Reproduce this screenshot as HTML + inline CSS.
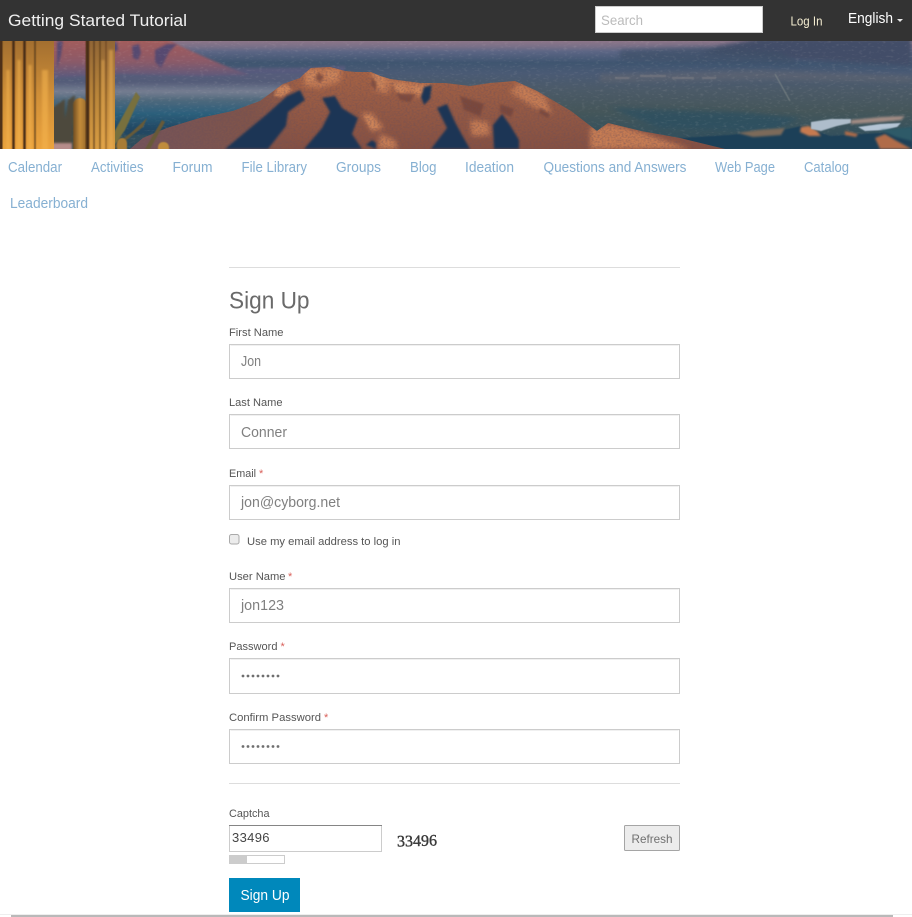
<!DOCTYPE html>
<html lang="en">
<head>
<meta charset="utf-8">
<title>Sign Up - Getting Started Tutorial</title>
<style>
html,body{margin:0;padding:0;background:#fff;width:912px;height:917px;overflow:hidden}
svg{display:block;position:absolute;left:0;top:0}
text{font-family:"Liberation Sans",sans-serif}
.nav{font-size:14.5px;fill:#86b0d2}
.lab{font-size:11px;fill:#555}
.val{font-size:14.5px;fill:#808080}
.req{font-size:11px;fill:#d9605a}
.box{fill:#fff;stroke:#ccc;stroke-width:1}
.in{fill:none;stroke:#f0f0f0;stroke-width:1}
.dot{fill:#6f6f6f}
</style>
</head>
<body>
<svg width="912" height="917" viewBox="0 0 912 917" xmlns="http://www.w3.org/2000/svg">
<defs>
<linearGradient id="plain" gradientUnits="userSpaceOnUse" x1="0" y1="41" x2="0" y2="149">
<stop offset="0" stop-color="#8c7588"/>
<stop offset=".05" stop-color="#7a7088"/>
<stop offset=".1" stop-color="#5b6584"/>
<stop offset=".2" stop-color="#3f5570"/>
<stop offset=".3" stop-color="#4a5a74"/>
<stop offset=".45" stop-color="#4b5a68"/>
<stop offset=".65" stop-color="#45565a"/>
<stop offset=".82" stop-color="#38525c"/>
<stop offset="1" stop-color="#2b4a5c"/>
</linearGradient>
<linearGradient id="pm" gradientUnits="userSpaceOnUse" x1="0" y1="41" x2="0" y2="78">
<stop offset="0" stop-color="#a25b5c"/>
<stop offset=".55" stop-color="#8c5a68"/>
<stop offset="1" stop-color="#5a5a7e"/>
</linearGradient>
<linearGradient id="val" gradientUnits="userSpaceOnUse" x1="0" y1="70" x2="0" y2="130">
<stop offset="0" stop-color="#565a7c"/>
<stop offset=".2" stop-color="#535c78"/>
<stop offset=".36" stop-color="#767e92"/>
<stop offset=".5" stop-color="#4f687c"/>
<stop offset=".72" stop-color="#2c607c"/>
<stop offset="1" stop-color="#214662"/>
</linearGradient>
<linearGradient id="rock" gradientUnits="userSpaceOnUse" x1="0" y1="66" x2="0" y2="149">
<stop offset="0" stop-color="#a96444"/>
<stop offset=".5" stop-color="#965a44"/>
<stop offset="1" stop-color="#855042"/>
</linearGradient>
<linearGradient id="rockL" gradientUnits="userSpaceOnUse" x1="130" y1="0" x2="300" y2="0">
<stop offset="0" stop-color="#74545a"/>
<stop offset=".7" stop-color="#80544a"/>
<stop offset="1" stop-color="#80544a" stop-opacity="0"/>
</linearGradient>
<linearGradient id="cacBase" gradientUnits="userSpaceOnUse" x1="0" y1="41" x2="0" y2="149">
<stop offset="0" stop-color="#a36f30"/>
<stop offset=".5" stop-color="#cf8f38"/>
<stop offset="1" stop-color="#eba33e"/>
</linearGradient>
<linearGradient id="cacBase2" gradientUnits="userSpaceOnUse" x1="0" y1="41" x2="0" y2="149">
<stop offset="0" stop-color="#916636"/>
<stop offset=".5" stop-color="#b9853a"/>
<stop offset="1" stop-color="#d89c42"/>
</linearGradient>
<linearGradient id="smallc" gradientUnits="userSpaceOnUse" x1="73" y1="0" x2="87" y2="0">
<stop offset="0" stop-color="#6e4c22"/>
<stop offset=".5" stop-color="#c48c3a"/>
<stop offset="1" stop-color="#96692c"/>
</linearGradient>
<filter id="b1" filterUnits="userSpaceOnUse" x="-40" y="0" width="1000" height="200"><feGaussianBlur stdDeviation="1"/></filter>
<filter id="b2" filterUnits="userSpaceOnUse" x="-40" y="0" width="1000" height="200"><feGaussianBlur stdDeviation=".6"/></filter>
<filter id="b3" filterUnits="userSpaceOnUse" x="-40" y="0" width="1000" height="200"><feGaussianBlur stdDeviation="2.5"/></filter>
<filter id="gd" filterUnits="userSpaceOnUse" x="0" y="41" width="912" height="108">
<feTurbulence type="fractalNoise" baseFrequency=".5 .6" numOctaves="2" seed="4"/>
<feColorMatrix values="0 0 0 0 .15  0 0 0 0 .08  0 0 0 0 .1  2 0 0 0 -.8"/>
</filter>
<filter id="gl" filterUnits="userSpaceOnUse" x="0" y="41" width="912" height="108">
<feTurbulence type="fractalNoise" baseFrequency=".22 .5" numOctaves="2" seed="9"/>
<feColorMatrix values="0 0 0 0 .78  0 0 0 0 .72  0 0 0 0 .68  2.6 0 0 0 -1.45"/>
</filter>
<clipPath id="bn"><rect x="0" y="41" width="912" height="108"/></clipPath>
<clipPath id="mc"><path d="M130 149L143 138L167 128L200 118L233 111L260 101L283 84L300 78L304 74L311 68L330 67L345 71L356 72L371 72L380 76L390 79L420 83L445 83L470 86L490 83L515 81L537 91L571 111L597 131L608 123L641 131L680 138L725 149Z"/></clipPath>
</defs>

<rect x="0" y="0" width="912" height="41" fill="#333"/>
<text x="8" y="26" font-size="16.5" fill="#f0f0f0" textLength="179" lengthAdjust="spacingAndGlyphs">Getting Started Tutorial</text>
<rect x="595.5" y="6.5" width="167" height="26" fill="#fff" stroke="#ccc"/>
<text x="601" y="25" font-size="14" fill="#bbb" textLength="42" lengthAdjust="spacingAndGlyphs">Search</text>
<text x="790.5" y="25.5" font-size="12.5" fill="#f3ecd0" textLength="32" lengthAdjust="spacingAndGlyphs">Log In</text>
<text x="848" y="23" font-size="14.5" fill="#fff" textLength="45" lengthAdjust="spacingAndGlyphs">English</text>
<path d="M897 19h6l-3 3z" fill="#e8e8e8"/>

<g clip-path="url(#bn)">
<rect x="0" y="41" width="912" height="108" fill="url(#plain)"/>
<path d="M760 38L912 38V66L840 62L700 54L720 46Z" fill="#434e68" filter="url(#b3)"/>
<path d="M620 50L700 47L780 52L800 64L700 62L620 60Z" fill="#3d5068" opacity=".7" filter="url(#b3)"/>
<path d="M600 74L760 70L912 76V82L760 80L600 82Z" fill="#6d6c70" opacity=".4" filter="url(#b3)"/>
<path d="M610 108L740 112L800 118L770 132L660 128Z" fill="#2c5062" opacity=".7" filter="url(#b3)"/>
<path d="M40 68H300L345 66L340 135H40Z" fill="url(#val)" filter="url(#b1)"/>
<path d="M50 38H165L180 46L207 58L233 69L250 75L200 76L120 74L50 78Z" fill="url(#pm)" filter="url(#b1)"/>
<path d="M132 46l7-2 2 9-3 7-5-2zM155 50l12-6 10 0-8 8-4 8-4 8-6-6zM57 41h6l-2 14-4 14zM112 42l5 0 1 8-6 3z" fill="#574a70" filter="url(#b1)"/>

<rect x="0" y="41" width="912" height="108" filter="url(#gl)" opacity=".14"/>
<path d="M775 74L790 101" stroke="#8b9290" stroke-width="1" fill="none" opacity=".7" filter="url(#b2)"/>
<path d="M672 78h22M702 78h14M640 76h26M615 78h14" stroke="#8d8a8c" stroke-width="2" opacity=".45" filter="url(#b2)"/>

<path d="M660 149L681 138L730 135L788 129L801 126L830 136L880 133L912 128V149Z" fill="#1f3f58" filter="url(#b2)"/>
<path d="M738 133l20-3 27-2-4 7-28 2z" fill="#7c6a5a" filter="url(#b1)"/>
<path d="M801 127l8-1 8 5 4 5-12 0-9-4z" fill="#c67a50" filter="url(#b1)"/>
<path d="M811 122l20-3 20 0 0 4-14 3-16 5-10-2z" fill="#aebdcb" filter="url(#b2)"/>
<path d="M851 120l30-3 24-1-4 4-20 2-30 2z" fill="#a38c84" filter="url(#b1)"/>
<path d="M858 127l22-3 21-1-4 4-12 3-20 1z" fill="#b5c5d5" filter="url(#b2)"/>
<path d="M845 131l13 3-2 3-11-2zM875 138l10-4 10 6 13 7 4 2h-32z" fill="#b06c48" filter="url(#b1)"/>
<path d="M880 130l32-3v14l-16-4z" fill="#2d5a68" filter="url(#b1)"/>

<g clip-path="url(#mc)">
<rect x="125" y="60" width="610" height="95" fill="url(#rock)"/>
<rect x="130" y="60" width="170" height="95" fill="url(#rockL)"/>
<g filter="url(#b3)">
<path d="M304 68H342L340 82L320 88L304 86ZM371 70L392 78L388 94L374 90ZM390 79L432 84L428 97L400 96ZM361 113L372 113L384 128L372 132ZM520 82L545 96L552 115L530 105L510 92ZM470 120L488 122L490 135L472 136ZM590 128L612 124L640 132L690 149H590ZM380 134L395 140L398 149H378Z" fill="#c67c52"/>
</g>
<g filter="url(#b1)">
<path d="M306 72l10-2 2 7-10 6zM326 70l12 1-2 8-8 0zM373 74l12 4-2 10-8-4zM394 83l12 2-2 8-8-2zM412 86l14 1-4 7-8-2zM364 116l7 0 8 11-8 2zM277 87l10-3 5 6-10 7-8-1z" fill="#cd8458"/>
<path d="M372 76l5 7-1 8-5-6zM318 72l6 5-4 6-5-5zM396 93l20 1-6 8-10-2zM460 96l24 8-4 12-16-6zM500 104l14 5-3 8-11-5zM540 108l10 6-2 4-9-5z" fill="#6e4038" opacity=".7"/>
</g>
<rect x="125" y="60" width="610" height="95" filter="url(#gd)" opacity=".55"/>
<g filter="url(#b1)" fill="#1f3555">
<path d="M225 149L267 114L287 96L300 90L305 100L288 112L286 126L268 149Z"/>
<path d="M304 149L322 128L330 112L322 98L335 96L342 108L358 118L352 134L362 149Z"/>
<path d="M431 149L447 128L437 108L447 104L455 122L462 135L470 149Z"/>
<path d="M494 149L493 125L502 114L510 125L519 140L519 149Z"/>
<path d="M366 145l6-5 4 3 0 6zM424 87l8-2-2 14-6 6-3-8z"/>
</g>
</g>

<path d="M52 149V108L65 99V149ZM60 149L68 100L75 95L72 149Z" fill="#4d4a3c" filter="url(#b1)"/>
<path d="M112 149L125 130L140 97L136 92L118 125L105 149Z" fill="#78703e" filter="url(#b2)"/>
<path d="M115 149L143 127L147 118L132 132L110 149ZM150 149L165 122L162 120L145 149Z" fill="#675a38" filter="url(#b2)"/>
<rect x="52" y="143" width="20" height="8" fill="#b78d8a" filter="url(#b1)"/>
<rect x="73" y="98" width="14" height="70" rx="7" fill="url(#smallc)" filter="url(#b2)"/>
<rect x="117" y="138" width="10" height="20" rx="5" fill="#a87b36" filter="url(#b2)"/>
<rect x="158" y="142" width="11" height="20" rx="5" fill="#c08c3d" filter="url(#b2)"/>

<rect x="-2" y="38" width="56" height="115" fill="url(#cacBase)"/>
<g filter="url(#b2)" fill="none" stroke="#4a2e18">
<path d="M1 38V150" stroke-width="3"/>
<path d="M13.5 38V150" stroke-width="2.5"/>
<path d="M24.5 38V150" stroke-width="2.5"/>
<path d="M35 38V150" stroke-width="1.6" opacity=".7"/>
</g>
<g filter="url(#b1)" fill="none" stroke="#f3b24e" opacity=".6">
<path d="M8 70V150" stroke-width="3"/>
<path d="M19 60V150" stroke-width="3"/>
<path d="M30 65V150" stroke-width="3"/>
<path d="M45 70V150" stroke-width="6"/>
</g>
<rect x="86" y="38" width="29" height="115" fill="url(#cacBase2)"/>
<g filter="url(#b2)" fill="none" stroke="#4a2e18">
<path d="M87.5 38V150" stroke-width="3.5"/>
<path d="M94 38V150" stroke-width="1.4" opacity=".7"/>
<path d="M100 38V150" stroke-width="1.4" opacity=".6"/>
<path d="M106 38V150" stroke-width="1.2" opacity=".5"/>
</g>
<g filter="url(#b1)" fill="none" stroke="#eeb056" opacity=".55">
<path d="M103 60V150" stroke-width="2.5"/>
<path d="M111 50V150" stroke-width="4"/>
</g>
</g>

<text class="nav" x="8" y="172" textLength="54" lengthAdjust="spacingAndGlyphs">Calendar</text>
<text class="nav" x="91" y="172" textLength="52.5" lengthAdjust="spacingAndGlyphs">Activities</text>
<text class="nav" x="172.5" y="172" textLength="40" lengthAdjust="spacingAndGlyphs">Forum</text>
<text class="nav" x="241.5" y="172" textLength="65.5" lengthAdjust="spacingAndGlyphs">File Library</text>
<text class="nav" x="336" y="172" textLength="45" lengthAdjust="spacingAndGlyphs">Groups</text>
<text class="nav" x="410" y="172" textLength="26.5" lengthAdjust="spacingAndGlyphs">Blog</text>
<text class="nav" x="465" y="172" textLength="49" lengthAdjust="spacingAndGlyphs">Ideation</text>
<text class="nav" x="543.5" y="172" textLength="143" lengthAdjust="spacingAndGlyphs">Questions and Answers</text>
<text class="nav" x="715" y="172" textLength="60" lengthAdjust="spacingAndGlyphs">Web Page</text>
<text class="nav" x="804" y="172" textLength="45" lengthAdjust="spacingAndGlyphs">Catalog</text>
<text class="nav" x="10" y="208" textLength="78" lengthAdjust="spacingAndGlyphs">Leaderboard</text>

<rect x="229" y="267" width="451" height="1" fill="#ddd"/>
<text x="229" y="308.5" font-size="24" fill="#6a6a6a" textLength="80.5" lengthAdjust="spacingAndGlyphs">Sign Up</text>

<text class="lab" x="229" y="336" textLength="54.5" lengthAdjust="spacingAndGlyphs">First Name</text>
<rect class="box" x="229.5" y="344.5" width="450" height="34"/>
<path class="in" d="M230.5 345.5H678.5"/>
<text class="val" x="241" y="366" textLength="20" lengthAdjust="spacingAndGlyphs">Jon</text>

<text class="lab" x="229" y="406" textLength="53.5" lengthAdjust="spacingAndGlyphs">Last Name</text>
<rect class="box" x="229.5" y="414.5" width="450" height="34"/>
<path class="in" d="M230.5 415.5H678.5"/>
<text class="val" x="241" y="437" textLength="46" lengthAdjust="spacingAndGlyphs">Conner</text>

<text class="lab" x="229" y="477" textLength="27" lengthAdjust="spacingAndGlyphs">Email</text>
<text class="req" x="259" y="477">*</text>
<rect class="box" x="229.5" y="485.5" width="450" height="34"/>
<path class="in" d="M230.5 486.5H678.5"/>
<text class="val" x="241" y="507" textLength="99" lengthAdjust="spacingAndGlyphs">jon@cyborg.net</text>

<rect x="229.5" y="534.5" width="9.5" height="9.5" rx="2" fill="#ececec" stroke="#aaa"/>
<text class="lab" x="247" y="545" textLength="153.5" lengthAdjust="spacingAndGlyphs">Use my email address to log in</text>

<text class="lab" x="229" y="580" textLength="56.5" lengthAdjust="spacingAndGlyphs">User Name</text>
<text class="req" x="288" y="580">*</text>
<rect class="box" x="229.5" y="588.5" width="450" height="34"/>
<path class="in" d="M230.5 589.5H678.5"/>
<text class="val" x="241" y="610" textLength="43" lengthAdjust="spacingAndGlyphs">jon123</text>

<text class="lab" x="229" y="650" textLength="48.5" lengthAdjust="spacingAndGlyphs">Password</text>
<text class="req" x="280.5" y="650">*</text>
<rect class="box" x="229.5" y="658.5" width="450" height="35"/>
<path class="in" d="M230.5 659.5H678.5"/>
<g class="dot">
<circle cx="243" cy="676" r="1.4"/><circle cx="248" cy="676" r="1.4"/><circle cx="253" cy="676" r="1.4"/><circle cx="258" cy="676" r="1.4"/><circle cx="263" cy="676" r="1.4"/><circle cx="268" cy="676" r="1.4"/><circle cx="273" cy="676" r="1.4"/><circle cx="278" cy="676" r="1.4"/>
</g>

<text class="lab" x="229" y="721" textLength="92" lengthAdjust="spacingAndGlyphs">Confirm Password</text>
<text class="req" x="324" y="721">*</text>
<rect class="box" x="229.5" y="729.5" width="450" height="34"/>
<path class="in" d="M230.5 730.5H678.5"/>
<g class="dot">
<circle cx="243" cy="746.5" r="1.4"/><circle cx="248" cy="746.5" r="1.4"/><circle cx="253" cy="746.5" r="1.4"/><circle cx="258" cy="746.5" r="1.4"/><circle cx="263" cy="746.5" r="1.4"/><circle cx="268" cy="746.5" r="1.4"/><circle cx="273" cy="746.5" r="1.4"/><circle cx="278" cy="746.5" r="1.4"/>
</g>

<rect x="229" y="783" width="451" height="1" fill="#ddd"/>

<text class="lab" x="229" y="817" textLength="40.5" lengthAdjust="spacingAndGlyphs">Captcha</text>
<rect x="229.5" y="825.5" width="152" height="26" fill="#fff" stroke="#ccc"/>
<rect x="229" y="825" width="153" height="1" fill="#858585"/>
<text x="232" y="842" font-size="13" fill="#444" textLength="37.5" lengthAdjust="spacing">33496</text>
<text x="397" y="846" font-size="16" fill="#3a3a3a" transform="rotate(-1.5 417 842)" style="font-family:'Liberation Serif',serif;stroke:#3a3a3a;stroke-width:.4" textLength="40" lengthAdjust="spacingAndGlyphs">33496</text>
<rect x="229.5" y="855.5" width="55" height="8" fill="#fff" stroke="#ccc"/>
<rect x="229" y="855" width="18" height="9" fill="#ccc"/>

<rect x="624.5" y="825.5" width="55" height="25" rx="1" fill="#ececec" stroke="#a5a5a5"/>
<text x="631.5" y="843" font-size="12" fill="#707070" textLength="41" lengthAdjust="spacingAndGlyphs">Refresh</text>

<rect x="229" y="878" width="71" height="34" fill="#0088bb"/>
<text x="240.5" y="900" font-size="14.5" fill="#fff" textLength="49" lengthAdjust="spacingAndGlyphs">Sign Up</text>

<rect x="0" y="914" width="912" height="1" fill="#eee"/>
<rect x="11" y="915" width="882" height="2" fill="#b9b9b9"/>
</svg>
</body>
</html>
